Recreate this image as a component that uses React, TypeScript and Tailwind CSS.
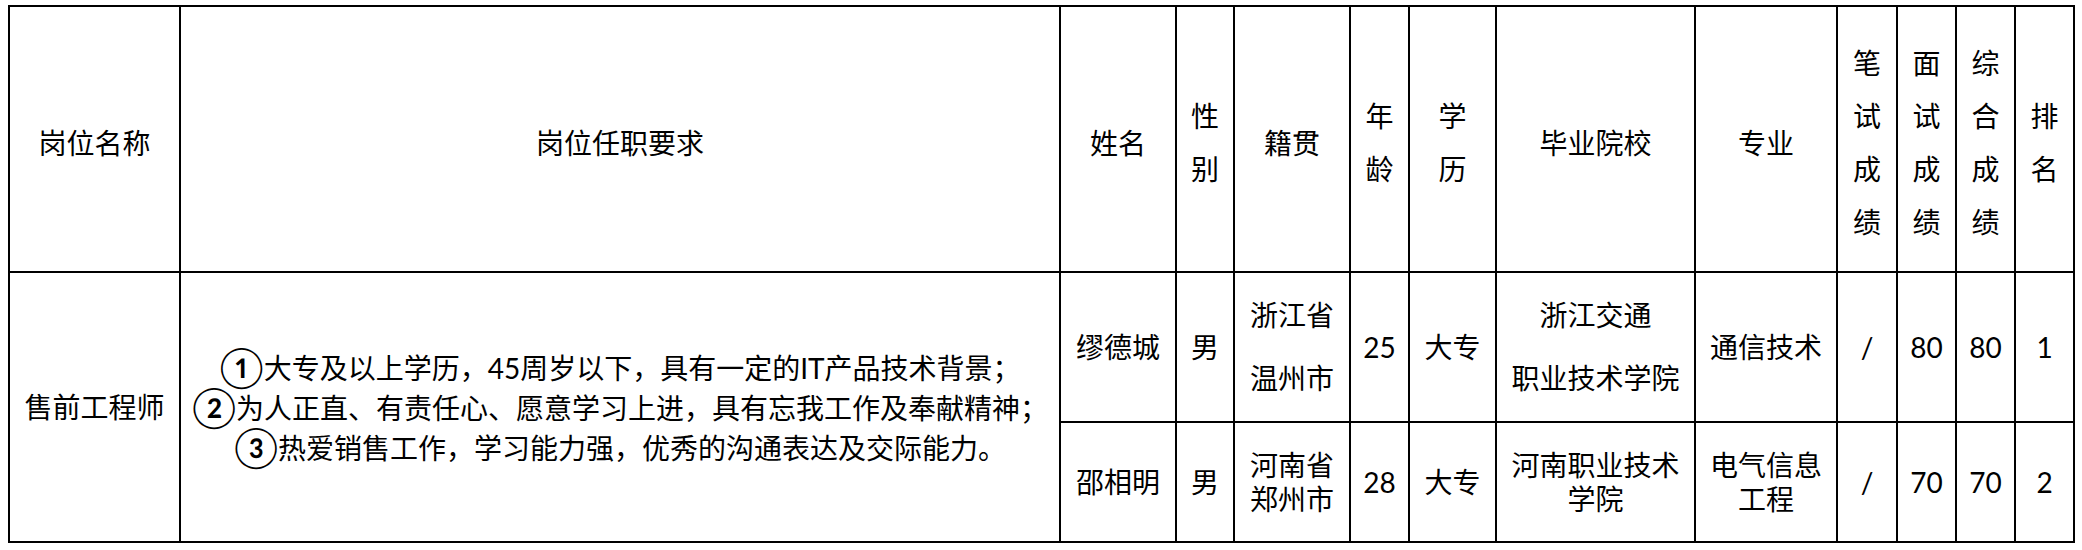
const head = "flex items-center justify-center bg-white text-center leading-[53px] pt-[8px]";
const cell = "flex items-center justify-center bg-white text-center";

function Stack({ items, lh }: { items: React.ReactNode[]; lh: string }) {
  return (
    <div className={lh}>
      {items.map((t, i) => (
        <div key={i} className="whitespace-nowrap">
          {t}
        </div>
      ))}
    </div>
  );
}

// circled numbers are drawn bigger than the text in the source doc
function Num({ c }: { c: string }) {
  return <span className="align-[-3px] text-[40px] leading-none">{c}</span>;
}

export default function App() {
  return (
    <div className="min-h-[550px] w-[2082px] bg-white pl-[8px] pt-[5px] text-[28px] text-black font-[family-name:Lato,'Noto_Sans_CJK_SC',sans-serif]">
      <div className="grid w-fit grid-cols-[169px_878px_114px_56px_114px_57px_85px_197px_140px_58px_57px_57px_57px] grid-rows-[264px_148px_118px] gap-[2px] bg-black p-[2px]">
        {/* header */}
        <div className={head}>岗位名称</div>
        <div className={head}>岗位任职要求</div>
        <div className={head}>姓名</div>
        <div className={head}>
          <Stack items={["性", "别"]} lh="leading-[53px]" />
        </div>
        <div className={head}>籍贯</div>
        <div className={head}>
          <Stack items={["年", "龄"]} lh="leading-[53px]" />
        </div>
        <div className={head}>
          <Stack items={["学", "历"]} lh="leading-[53px]" />
        </div>
        <div className={head}>毕业院校</div>
        <div className={head}>专业</div>
        <div className={head}>
          <Stack items={["笔", "试", "成", "绩"]} lh="leading-[53px]" />
        </div>
        <div className={head}>
          <Stack items={["面", "试", "成", "绩"]} lh="leading-[53px]" />
        </div>
        <div className={head}>
          <Stack items={["综", "合", "成", "绩"]} lh="leading-[53px]" />
        </div>
        <div className={head}>
          <Stack items={["排", "名"]} lh="leading-[53px]" />
        </div>

        {/* position + requirements span both candidate rows */}
        <div className={`${cell} row-span-2`}>售前工程师</div>
        <div className={`${cell} row-span-2`}>
          <Stack
            lh="leading-[35px]"
            items={[
              <>
                <Num c="①" />大专及以上学历，45周岁以下，具有一定的IT产品技术背景；
              </>,
              <>
                <Num c="②" />为人正直、有责任心、愿意学习上进，具有忘我工作及奉献精神；
              </>,
              <>
                <Num c="③" />热爱销售工作，学习能力强，优秀的沟通表达及交际能力。
              </>,
            ]}
          />
        </div>

        {/* candidate 1 */}
        <div className={cell}>缪德城</div>
        <div className={cell}>男</div>
        <div className={cell}>
          <Stack items={["浙江省", "温州市"]} lh="leading-[63px]" />
        </div>
        <div className={cell}>25</div>
        <div className={cell}>大专</div>
        <div className={cell}>
          <Stack items={["浙江交通", "职业技术学院"]} lh="leading-[63px]" />
        </div>
        <div className={cell}>通信技术</div>
        <div className={cell}>/</div>
        <div className={cell}>80</div>
        <div className={cell}>80</div>
        <div className={cell}>1</div>

        {/* candidate 2 */}
        <div className={cell}>邵相明</div>
        <div className={cell}>男</div>
        <div className={cell}>
          <Stack items={["河南省", "郑州市"]} lh="leading-[34px]" />
        </div>
        <div className={cell}>28</div>
        <div className={cell}>大专</div>
        <div className={cell}>
          <Stack items={["河南职业技术", "学院"]} lh="leading-[34px]" />
        </div>
        <div className={cell}>
          <Stack items={["电气信息", "工程"]} lh="leading-[34px]" />
        </div>
        <div className={cell}>/</div>
        <div className={cell}>70</div>
        <div className={cell}>70</div>
        <div className={cell}>2</div>
      </div>
    </div>
  );
}
